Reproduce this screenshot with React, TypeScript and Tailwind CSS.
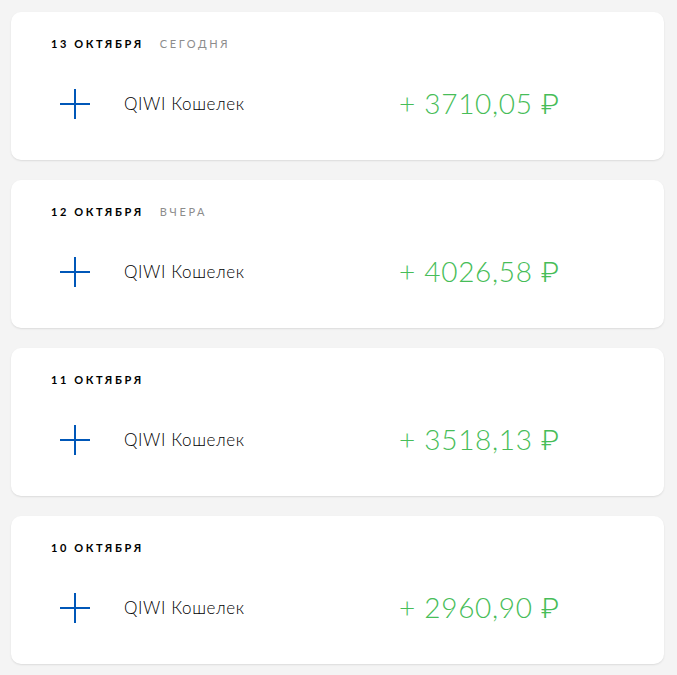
import React from "react";

const items = [
  { date: "13 ОКТЯБРЯ", rel: "СЕГОДНЯ", amount: "3710,05" },
  { date: "12 ОКТЯБРЯ", rel: "ВЧЕРА", amount: "4026,58" },
  { date: "11 ОКТЯБРЯ", rel: "", amount: "3518,13" },
  { date: "10 ОКТЯБРЯ", rel: "", amount: "2960,90" },
];

function Plus() {
  return (
    <svg width="30" height="30" viewBox="0 0 30 30">
      <path d="M15 0V30M0 15H30" stroke="#0057b8" strokeWidth="2" fill="none" />
    </svg>
  );
}

export default function App() {
  return (
    <div
      className="min-h-[675px] w-[677px] bg-[#f4f4f4] pt-[12px] pl-[11px] pr-[13px] flex flex-col gap-[20px]"
      style={{ fontFamily: "Lato, 'Open Sans', sans-serif" }}
    >
      {items.map((it) => (
        <div
          key={it.date}
          className="bg-white rounded-[10px] shadow-[0_1px_2px_rgba(0,0,0,0.1)] h-[148px] pl-[40px] pt-[23px]"
        >
          <div className="h-[16px] flex items-center text-[11px] font-bold tracking-[2.6px] leading-none">
            <span className="text-black">{it.date}</span>
            {it.rel && <span className="ml-[16px] text-[#8c8c8c] font-normal">{it.rel}</span>}
          </div>
          <div className="mt-[29px] h-[48px] flex items-center">
            <div className="w-[48px] flex items-center justify-center">
              <Plus />
            </div>
            <div className="w-[300px] pl-[25px] text-[17px] tracking-[0.6px] font-light text-black">QIWI Кошелек</div>
            <div className="text-[28px] font-light text-[#47bd58] leading-none tracking-[0.7px]">
              + {it.amount}{" "}
              <span className="font-light" style={{ fontFamily: "Roboto, 'DejaVu Sans', sans-serif" }}>₽</span>
            </div>
          </div>
        </div>
      ))}
    </div>
  );
}
